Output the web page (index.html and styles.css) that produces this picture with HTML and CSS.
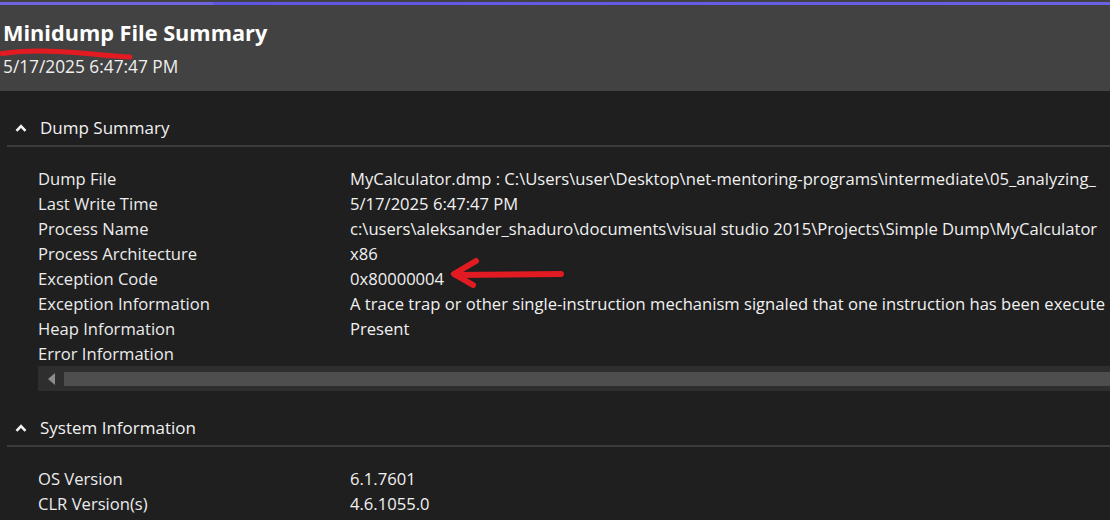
FILE: index.html
```html
<!DOCTYPE html>
<html lang="en">
<head>
<meta charset="utf-8">
<title>Minidump File Summary</title>
<link rel="stylesheet" href="styles.css">
</head>
<body>
<div class="page">
  <header class="header">
    <div class="accent"></div>
    <div class="header-body">
      <h1 class="title">Minidump File Summary</h1>
      <div class="subtitle">5/17/2025 6:47:47 PM</div>
    </div>
  </header>

  <main class="content">
    <section class="section">
      <div class="section-head">
        <svg class="chev" width="12" height="8" viewBox="0 0 12 8"><path d="M1.5 6.8 L6 2.2 L10.5 6.8" fill="none" stroke="#f4f4f4" stroke-width="2.6"/></svg>
        <span class="section-title">Dump Summary</span>
      </div>
      <div class="grid">
        <div class="label">Dump File</div><div class="value">MyCalculator.dmp : C:\Users\user\Desktop\net-mentoring-programs\intermediate\05_analyzing_</div>
        <div class="label">Last Write Time</div><div class="value">5/17/2025 6:47:47 PM</div>
        <div class="label">Process Name</div><div class="value">c:\users\aleksander_shaduro\documents\visual studio 2015\Projects\Simple Dump\MyCalculator</div>
        <div class="label">Process Architecture</div><div class="value">x86</div>
        <div class="label">Exception Code</div><div class="value">0x80000004</div>
        <div class="label">Exception Information</div><div class="value">A trace trap or other single-instruction mechanism signaled that one instruction has been execute</div>
        <div class="label">Heap Information</div><div class="value">Present</div>
        <div class="label">Error Information</div><div class="value"></div>
      </div>
      <div class="hscroll">
        <svg class="hscroll-arrow" width="8" height="12" viewBox="0 0 8 12"><path d="M8 0 L8 12 L1 6 Z" fill="#8c8c8c"/></svg>
        <div class="hscroll-thumb"></div>
      </div>
    </section>

    <section class="section">
      <div class="section-head">
        <svg class="chev" width="12" height="8" viewBox="0 0 12 8"><path d="M1.5 6.8 L6 2.2 L10.5 6.8" fill="none" stroke="#f4f4f4" stroke-width="2.6"/></svg>
        <span class="section-title">System Information</span>
      </div>
      <div class="grid">
        <div class="label">OS Version</div><div class="value">6.1.7601</div>
        <div class="label">CLR Version(s)</div><div class="value">4.6.1055.0</div>
      </div>
    </section>
  </main>

  <svg class="marks" width="1110" height="520" viewBox="0 0 1110 520">
    <path d="M2 53.5 C 25 50, 50 50.5, 75 52.5 S 115 56.5, 130 57" fill="none" stroke="#e21b22" stroke-width="5" stroke-linecap="round"/>
    <path d="M561 274 L456 275" fill="none" stroke="#e21b22" stroke-width="6" stroke-linecap="round"/>
    <path d="M476 261 L454 274 L473 285" fill="none" stroke="#e21b22" stroke-width="6" stroke-linecap="round" stroke-linejoin="round"/>
  </svg>
</div>
</body>
</html>
```

FILE: styles.css
```css
html, body {
  margin: 0;
  padding: 0;
  background: #1f1f1f;
}
body {
  font-family: "Open Sans", "Noto Sans", sans-serif;
  color: #f1f1f1;
  overflow: hidden;
  width: 1110px;
  height: 520px;
}
.page {
  position: relative;
  width: 1110px;
  height: 520px;
  overflow: hidden;
}
.header {
  background: #424242;
  padding-top: 2px;
  height: 89px;
}
.accent {
  height: 3px;
  background: linear-gradient(to right, #6d63dc 0, #6d63dc 213px, #5f55e3 213px, #6a61e6 100%);
}
.header-body {
  padding: 14px 0 0 3px;
}
.title {
  margin: 0;
  font-size: 21.7px;
  font-weight: 700;
  line-height: 28px;
  color: #ffffff;
  white-space: nowrap;
}
.subtitle {
  margin-top: 9px;
  font-size: 17.3px;
  line-height: 22px;
  color: #f0f0f0;
  white-space: nowrap;
}
.content {
  padding: 19px 0 0 7px;
}
.section-head {
  display: flex;
  align-items: center;
  height: 35px;
  border-bottom: 2px solid #3b3b3b;
}
.chev {
  margin-left: 8px;
  margin-right: 13px;
  display: block;
}
.section-title {
  font-size: 17px;
  color: #f1f1f1;
  white-space: nowrap;
}
.grid {
  display: grid;
  grid-template-columns: 312px 1fr;
  grid-auto-rows: 25px;
  margin: 19px 0 0 31px;
  font-size: 16.6px;
  line-height: 25px;
}
.label, .value {
  white-space: nowrap;
  overflow: hidden;
}
.label {
  color: #ececec;
}
.value {
  color: #f1f1f1;
}
.hscroll {
  display: flex;
  align-items: center;
  margin-left: 31px;
  height: 25px;
  background: #2e2e2e;
}
.hscroll-arrow {
  display: block;
  margin: 0 9px;
}
.hscroll-thumb {
  flex: 1;
  height: 14px;
  background: #4e4e4e;
}
.section + .section {
  margin-top: 19px;
}
.marks {
  position: absolute;
  left: 0;
  top: 0;
  pointer-events: none;
}
```
